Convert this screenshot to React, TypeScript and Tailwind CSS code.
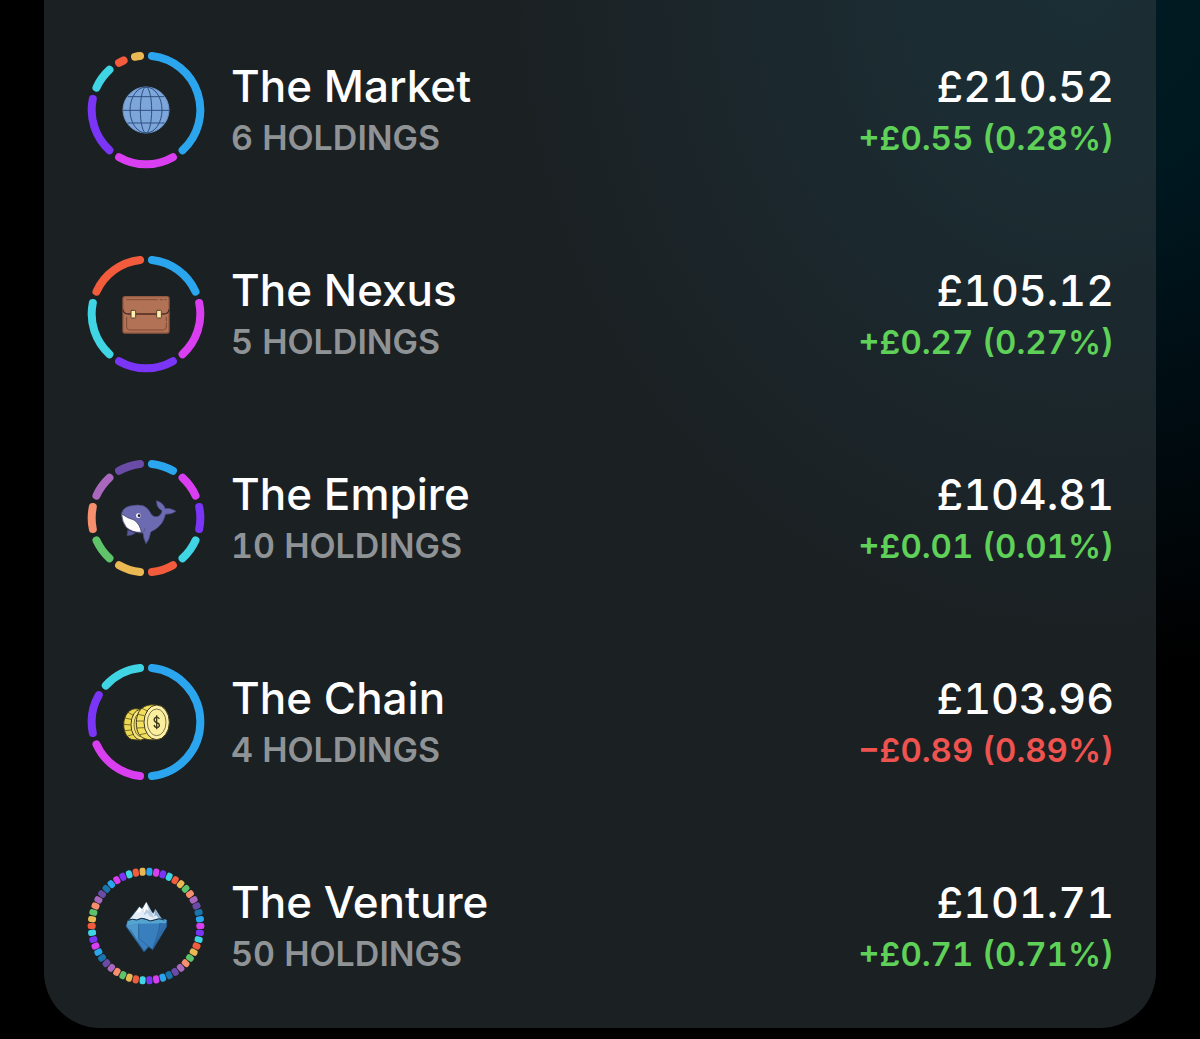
import React from 'react';
import clsx from 'clsx';

const PALETTE = {
  blue: '#2ba5ee',
  magenta: '#d93ff0',
  purple: '#7b35f7',
  cyan: '#3fd5e5',
  orange: '#f25b3c',
  yellow: '#ebb953',
  green: '#5fc36a',
  salmon: '#f58f6e',
  orchid: '#a968bd',
  violet: '#6b4ba8',
  navy: '#1a74ad'
};

type Segment = { share: number; color: string };

type Pie = {
  name: string;
  holdings: number;
  value: string;
  change: string;
  isLoss?: boolean;
  segments: Segment[];
  icon: React.ReactNode;
};

const COLORS = Object.values(PALETTE);
const RADIUS = 163;
// Half of the gap between two segments, round cap included
const GAP = 6.3;

const equalSegments = (count: number, colors: string[]): Segment[] =>
  Array.from({ length: count }, (_, i) => ({ share: 100 / count, color: colors[i % colors.length] }));

const pointAt = (deg: number) => {
  const rad = ((deg - 90) * Math.PI) / 180;
  return `${(RADIUS * Math.cos(rad)).toFixed(2)} ${(RADIUS * Math.sin(rad)).toFixed(2)}`;
};

const Ring: React.FC<{ segments: Segment[]; children: React.ReactNode }> = ({ segments, children }) => {
  let angle = 0;

  return (
    <svg viewBox="-177 -177 354 354" className="size-[118px] shrink-0" fill="none" aria-hidden="true">
      {segments.map(({ share, color }, i) => {
        const start = angle;
        const end = angle + share * 3.6;
        angle = end;

        // Too thin for round caps, draw a small pill instead
        if (end - start < 2 * GAP) {
          return (
            <rect
              key={i}
              x={-9}
              y={-RADIUS - 12}
              width={18}
              height={24}
              rx={7}
              fill={color}
              transform={`rotate(${(start + end) / 2})`}
            />
          );
        }

        const largeArc = end - start - 2 * GAP > 180 ? 1 : 0;
        return (
          <path
            key={i}
            d={`M${pointAt(start + GAP)}A${RADIUS} ${RADIUS} 0 ${largeArc} 1 ${pointAt(end - GAP)}`}
            stroke={color}
            strokeWidth={24}
            strokeLinecap="round"
          />
        );
      })}
      {children}
    </svg>
  );
};

const GlobeIcon = () => (
  <g stroke="#2f4f80" strokeWidth={3}>
    <circle r={69} fill="#7da6da" stroke="#6f97ca" />
    <ellipse rx={17} ry={69} />
    <ellipse rx={48} ry={69} />
    <path d="M-69 1H69M-55-40H55M-56 39H56" />
  </g>
);

const BriefcaseIcon = () => (
  <g strokeLinecap="round" strokeLinejoin="round">
    <rect x={-69} y={-52} width={138} height={109} rx={6} fill="#b17255" stroke="#935a42" strokeWidth={4} />
    <path d="M-69-12Q-67 0-52 0H52Q67 0 69-12" stroke="#4c2b20" strokeWidth={4} />
    <path d="M-58-43H34M42-43H50M56-43H61M-58 10V41Q-57 47-50 48H52Q60 47 61 39V27M61 20V10" stroke="#804b37" strokeWidth={3} />
    <rect x={-45} y={-11} width={14} height={23} rx={2} fill="#fff0b0" stroke="#5f432d" strokeWidth={3} />
    <rect x={32} y={-11} width={14} height={23} rx={2} fill="#fff0b0" stroke="#5f432d" strokeWidth={3} />
  </g>
);

const WhaleIcon = () => (
  <g strokeLinejoin="round">
    <path d="M-55 36Q-55 46-57 53Q-42 53-32 45Z" fill="#5b5b9b" stroke="#474783" strokeWidth={2} />
    <path
      d="M-74-13Q-69-31-49-36Q-22-42-6-36Q8-28 15-13Q22-1 34-4Q47-10 48-22Q30-32 32-52Q52-46 58-28Q70-32 90-20Q75-9 59-12Q55 3 48 15Q34 34 14 42Q11 64 0 77Q-8 62-9 45Q-36 47-60 28Q-73 10-74-13Z"
      fill="#6c6bb1"
      stroke="#4b4a87"
      strokeWidth={2}
    />
    <path d="M-73-12Q-55 1-36 6Q-18 18-14 43Q-42 44-59 28Q-72 11-73-12Z" fill="#fffdfa" stroke="#34335f" strokeWidth={2} />
    <path d="M-10 44Q-4 42-3 30" stroke="#4b4a87" strokeWidth={2} />
    <circle cx={-23} cy={-7} r={7} fill="#fff" />
    <circle cx={-21} cy={-7} r={4} fill="#1d1d38" />
  </g>
);

const CoinsIcon = () => (
  <g stroke="#40391a" strokeWidth={3}>
    <path d="M-23-39C-49-45-67-20-67 8C-67 34-53 52-39 53L-14 55V-38Z" fill="#ecd94f" />
    <ellipse cx={-16} cy={8} rx={29} ry={46} fill="#f7e67d" />
    <ellipse cx={-15} cy={8} rx={21} ry={36} fill="#f0db5c" strokeWidth={2} />
    <path d="M-63-12L-45-8M-67 7L-46 9M-64 26L-45 24M-54-29L-38-20M-55 42L-38 37" strokeWidth={2} />
    <path d="M29-51C4-54-28-46-29 2C-29 45-7 56 29 53Z" fill="#f2df5c" />
    <ellipse cx={32} cy={1} rx={38} ry={52} fill="#fbf0a5" />
    <ellipse cx={32} cy={1} rx={28} ry={40} fill="#fbef9d" strokeWidth={2} />
    <path d="M-24-23L-5-19M-29-3H-7M-28 18L-6 17M-19 38L1 34M-12-41L6-32" strokeWidth={2} />
    <path d="M40-9Q36-16 29-14Q23-11 25-4Q27 0 33 2Q41 5 40 12Q37 18 30 16Q25 14 24 9M32-20V22" strokeWidth={4} />
  </g>
);

const IcebergIcon = () => (
  <g strokeLinejoin="round">
    <path d="M-53-16L-20-58L-12-52L1-72L16-44L22-38L28-51L39-34L50-17L20-12L-20-12Z" fill="#e2edf7" stroke="#35506f" strokeWidth={2} />
    <path d="M1-71L16-44L24-24L10-31L4-40L-5-32L-10-49Z" fill="#b5cce3" />
    <path d="M1-71L9-45L1-50L-7-36L-8-54ZM-20-57L-12-50L-19-39L-25-43L-34-29Z" fill="#fff" />
    <path d="M28-50L39-33L49-18L37-25L31-32L25-29Z" fill="#8eafd0" />
    <path d="M-54-17Q-40-23-28-18Q-12-27 0-20Q13-11 25-18Q39-25 62-18V1L20 71L8 62L-6 77L-60 1Z" fill="#397fbe" stroke="#245b90" strokeWidth={2} />
    <path d="M-54-17Q-40-23-28-18Q-12-27 0-20Q13-11 25-18Q39-25 62-18L60-8L-22-7L-58 0Z" fill="#54a4d0" />
    <path d="M-58 0L-22-7L-25 48Z" fill="#4e98cb" />
    <path d="M-22-7L-22 36L8 62L-6 77L-48 10" stroke="#245b90" strokeWidth={2} />
    <path d="M42-9L38 15L20 70L60-7" fill="#316fae" stroke="#245b90" strokeWidth={2} />
    <path d="M-54-17Q-40-23-28-18Q-12-27 0-20Q13-11 25-18Q39-25 55-18" stroke="#172c45" strokeWidth={3} />
  </g>
);

const { blue, magenta, purple, cyan, orange, yellow, green, salmon, orchid, violet } = PALETTE;

const pies: Pie[] = [
  {
    name: 'The Market',
    holdings: 6,
    value: '£210.52',
    change: '+£0.55 (0.28%)',
    segments: [
      { share: 40, color: blue },
      { share: 20, color: magenta },
      { share: 20, color: purple },
      { share: 10, color: cyan },
      { share: 5, color: orange },
      { share: 5, color: yellow }
    ],
    icon: <GlobeIcon />
  },
  {
    name: 'The Nexus',
    holdings: 5,
    value: '£105.12',
    change: '+£0.27 (0.27%)',
    segments: equalSegments(5, [blue, magenta, purple, cyan, orange]),
    icon: <BriefcaseIcon />
  },
  {
    name: 'The Empire',
    holdings: 10,
    value: '£104.81',
    change: '+£0.01 (0.01%)',
    segments: equalSegments(10, [blue, magenta, purple, cyan, orange, yellow, green, salmon, orchid, violet]),
    icon: <WhaleIcon />
  },
  {
    name: 'The Chain',
    holdings: 4,
    value: '£103.96',
    change: '−£0.89 (0.89%)',
    isLoss: true,
    segments: [
      { share: 50, color: blue },
      { share: 20, color: magenta },
      { share: 15, color: purple },
      { share: 15, color: cyan }
    ],
    icon: <CoinsIcon />
  },
  {
    name: 'The Venture',
    holdings: 50,
    value: '£101.71',
    change: '+£0.71 (0.71%)',
    segments: equalSegments(50, COLORS),
    icon: <IcebergIcon />
  }
];

const PieRow: React.FC<{ pie: Pie }> = ({ pie }) => (
  <li className="flex items-center gap-[26px] tabular-nums">
    <Ring segments={pie.segments}>{pie.icon}</Ring>
    <div className="flex-1 pt-1">
      <h2 className="text-[44px] leading-[52px] font-medium text-white">{pie.name}</h2>
      <p className="text-[34px] leading-[52px] font-semibold text-[#8f9396]">{pie.holdings} HOLDINGS</p>
    </div>
    <div className="pt-1 text-right whitespace-nowrap">
      <p className="text-[43px] leading-[52px] font-medium text-white">{pie.value}</p>
      <p
        className={clsx('text-[33px] leading-[52px] font-semibold', pie.isLoss ? 'text-[#ee5350]' : 'text-[#5fd058]')}
      >
        {pie.change}
      </p>
    </div>
  </li>
);

const App = () => (
  <main className="min-h-screen bg-black bg-[radial-gradient(ellipse_600px_690px_at_90%_-20px,#001c25_0%,#001820_30%,#000b10_68%,#000000_100%)] px-11 pb-[11px] font-['Inter',sans-serif]">
    <ul className="flex flex-col gap-[86px] rounded-b-[56px] bg-[#364044]/50 pt-[51px] pr-[42px] pb-[43px] pl-[43px]">
      {pies.map((pie) => (
        <PieRow key={pie.name} pie={pie} />
      ))}
    </ul>
  </main>
);

export default App;
